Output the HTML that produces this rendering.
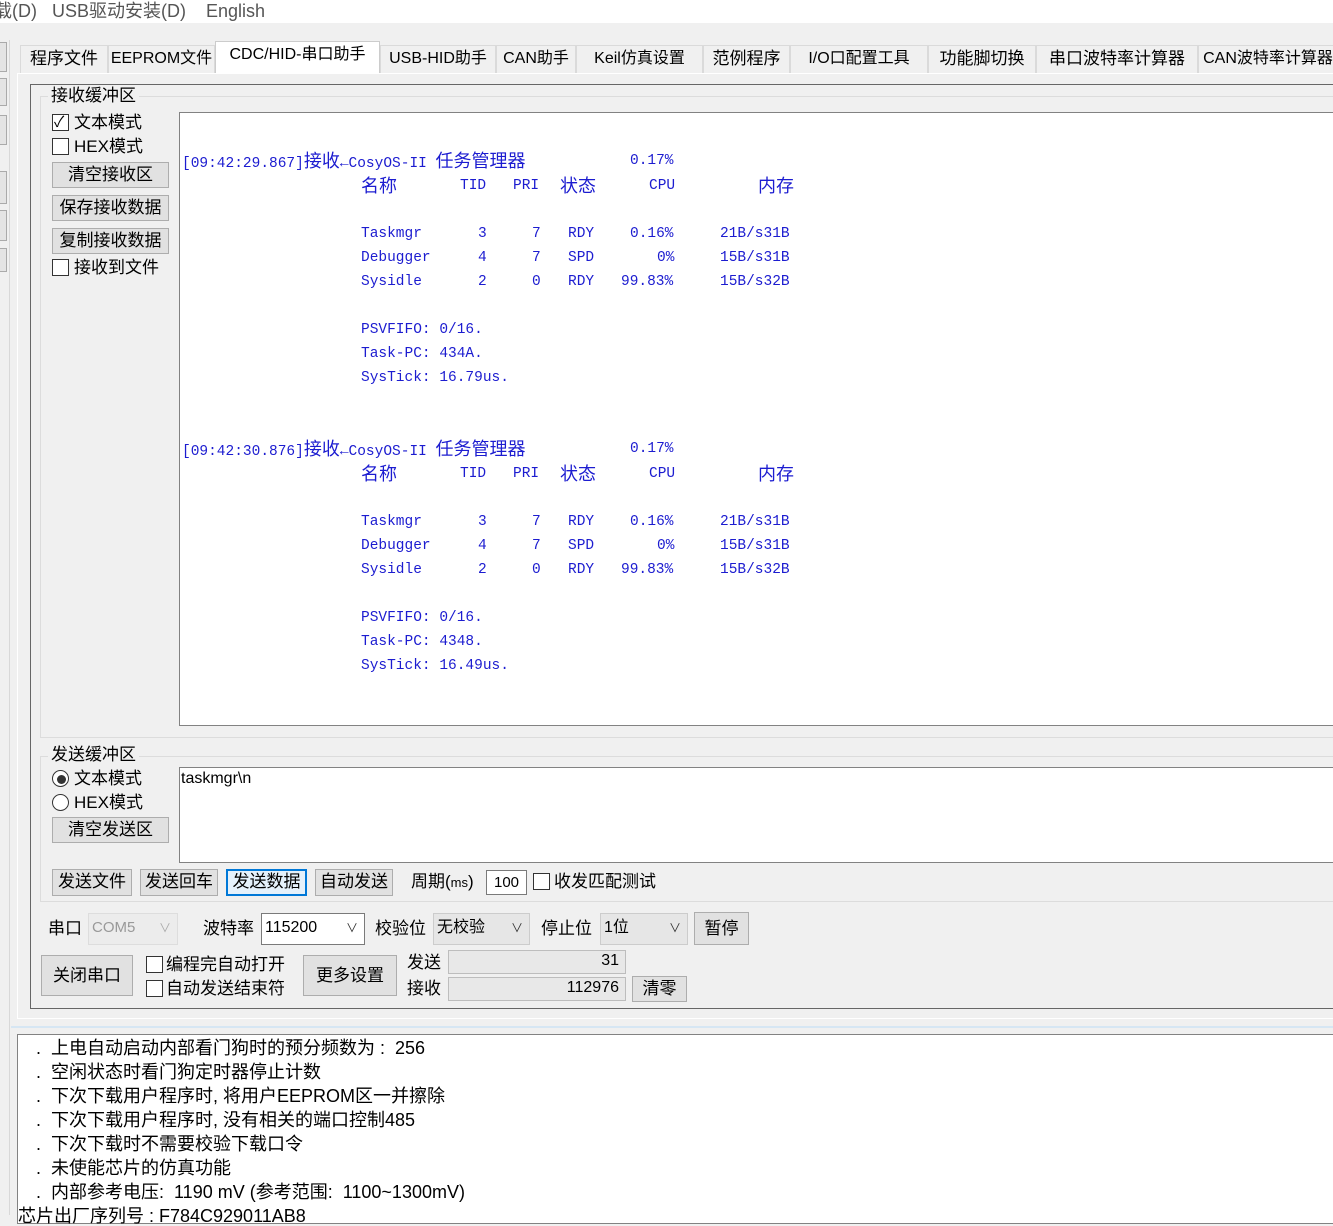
<!DOCTYPE html>
<html><head><meta charset="utf-8"><style>
*{margin:0;padding:0;box-sizing:border-box}
body{width:1333px;height:1215px;overflow:hidden;background:#f0f0f0;position:relative;font-family:"Liberation Sans","Noto Sans CJK SC",sans-serif;color:#000}
.a{position:absolute;white-space:nowrap}
.t{font-size:17px;line-height:20px}
.tab{position:absolute;top:45px;height:28px;background:#f0f0f0;border:1px solid #dadada;border-bottom:none;font-size:17px;line-height:26px;text-align:center;white-space:nowrap;overflow:hidden}
.btn{position:absolute;background:#e1e1e1;border:1px solid #adadad;font-size:17px;line-height:24px;text-align:center;white-space:nowrap}
.cb{position:absolute;width:17px;height:17px;border:1px solid #333;background:#fff}
.rb{position:absolute;width:17px;height:17px;border:1px solid #333;border-radius:50%;background:#fff}
.m{font-family:"Liberation Mono","Noto Sans CJK SC",monospace;font-size:14.5px;color:#1c1cd0;position:absolute;white-space:nowrap;line-height:18px}
.m b{font-weight:normal;font-size:18px;font-family:"Noto Sans CJK SC",sans-serif}
.sel{position:absolute;background:#fff;border:1px solid #7a7a7a;font-size:16px;line-height:28px;padding-left:3px;white-space:nowrap}
.chev{position:absolute;right:6px;top:0;font-size:12px;color:#333}
.box{position:absolute;background:#e8e8e8;border:1px solid #bdbdbd;font-size:16px;line-height:20px;text-align:right;padding-right:6px}
</style></head><body>
<div class="a" style="left:0;top:0;width:1333px;height:23px;background:#fff"></div>
<div class="a t" style="left:-6px;top:1px;color:#555;font-size:18px">载(D)&nbsp;&nbsp; USB驱动安装(D)&nbsp;&nbsp;&nbsp; English</div>

<div class="a" style="left:-2px;top:42px;width:9px;height:30px;border:1px solid #aaa;background:#e4e4e4"></div>
<div class="a" style="left:-2px;top:78px;width:9px;height:28px;border:1px solid #aaa;background:#e4e4e4"></div>
<div class="a" style="left:-2px;top:115px;width:9px;height:30px;border:1px solid #aaa;background:#e4e4e4"></div>
<div class="a" style="left:-2px;top:171px;width:9px;height:33px;border:1px solid #aaa;background:#e4e4e4"></div>
<div class="a" style="left:-2px;top:210px;width:9px;height:31px;border:1px solid #aaa;background:#e4e4e4"></div>
<div class="a" style="left:-2px;top:248px;width:9px;height:24px;border:1px solid #aaa;background:#e4e4e4"></div>
<div class="a" style="left:9px;top:40px;width:1px;height:1175px;background:#d8d8d8"></div>

<div class="tab" style="left:20px;width:88px">程序文件</div>
<div class="tab" style="left:108px;width:107px;font-size:16px">EEPROM文件</div>
<div class="tab" style="left:215px;width:165px;top:41px;height:33px;background:#fff;border-color:#ccc;font-size:16px">CDC/HID-串口助手</div>
<div class="tab" style="left:380px;width:116px;font-size:16px">USB-HID助手</div>
<div class="tab" style="left:496px;width:80px;font-size:16px">CAN助手</div>
<div class="tab" style="left:576px;width:127px;font-size:16px">Keil仿真设置</div>
<div class="tab" style="left:703px;width:87px">范例程序</div>
<div class="tab" style="left:790px;width:138px;font-size:16px">I/O口配置工具</div>
<div class="tab" style="left:928px;width:108px">功能脚切换</div>
<div class="tab" style="left:1036px;width:162px">串口波特率计算器</div>
<div class="tab" style="left:1198px;width:140px;font-size:16px">CAN波特率计算器</div>

<div class="a" style="left:17px;top:73px;width:1330px;height:946px;border:1px solid #fff;border-right:none;background:#f0f0f0"></div>
<div class="a" style="left:30px;top:84px;width:1310px;height:925px;border:1px solid #666;border-right:none"></div>

<div class="a" style="left:40px;top:96px;width:1300px;height:642px;border:1px solid #dcdcdc;border-right:none"></div>
<div class="a t" style="left:48px;top:86px;background:#f0f0f0;padding:0 3px">接收缓冲区</div>
<div class="cb" style="left:52px;top:114px"></div><div class="a" style="left:54px;top:111px;font-size:15px">✓</div>
<div class="a t" style="left:74px;top:113px">文本模式</div>
<div class="cb" style="left:52px;top:138px"></div>
<div class="a t" style="left:74px;top:137px">HEX模式</div>
<div class="btn" style="left:52px;top:162px;width:117px;height:26px">清空接收区</div>
<div class="btn" style="left:52px;top:195px;width:117px;height:26px">保存接收数据</div>
<div class="btn" style="left:52px;top:228px;width:117px;height:26px">复制接收数据</div>
<div class="cb" style="left:52px;top:259px"></div>
<div class="a t" style="left:74px;top:258px">接收到文件</div>

<div class="a" style="left:179px;top:112px;width:1160px;height:614px;background:#fff;border:1px solid #828282;border-right:none"></div>

<div class="m" style="left:182px;top:151px">[09:42:29.867]<b>接收</b>←CosyOS-II <b>任务管理器</b></div>
<div class="m" style="left:630px;top:152px">0.17%</div>
<div class="m" style="left:361px;top:176px"><b>名称</b></div><div class="m" style="left:460px;top:177px">TID</div><div class="m" style="left:513px;top:177px">PRI</div><div class="m" style="left:560px;top:176px"><b>状态</b></div><div class="m" style="left:649px;top:177px">CPU</div><div class="m" style="left:758px;top:176px"><b>内存</b></div>
<div class="m" style="left:361px;top:225px">Taskmgr</div><div class="m" style="left:478px;top:225px">3</div><div class="m" style="left:532px;top:225px">7</div><div class="m" style="left:568px;top:225px">RDY</div><div class="m" style="left:630px;top:225px">0.16%</div><div class="m" style="left:720px;top:225px">21B/s31B</div>
<div class="m" style="left:361px;top:249px">Debugger</div><div class="m" style="left:478px;top:249px">4</div><div class="m" style="left:532px;top:249px">7</div><div class="m" style="left:568px;top:249px">SPD</div><div class="m" style="left:657px;top:249px">0%</div><div class="m" style="left:720px;top:249px">15B/s31B</div>
<div class="m" style="left:361px;top:273px">Sysidle</div><div class="m" style="left:478px;top:273px">2</div><div class="m" style="left:532px;top:273px">0</div><div class="m" style="left:568px;top:273px">RDY</div><div class="m" style="left:621px;top:273px">99.83%</div><div class="m" style="left:720px;top:273px">15B/s32B</div>
<div class="m" style="left:361px;top:321px">PSVFIFO: 0/16.</div>
<div class="m" style="left:361px;top:345px">Task-PC: 434A.</div>
<div class="m" style="left:361px;top:369px">SysTick: 16.79us.</div>

<div class="m" style="left:182px;top:439px">[09:42:30.876]<b>接收</b>←CosyOS-II <b>任务管理器</b></div>
<div class="m" style="left:630px;top:440px">0.17%</div>
<div class="m" style="left:361px;top:464px"><b>名称</b></div><div class="m" style="left:460px;top:465px">TID</div><div class="m" style="left:513px;top:465px">PRI</div><div class="m" style="left:560px;top:464px"><b>状态</b></div><div class="m" style="left:649px;top:465px">CPU</div><div class="m" style="left:758px;top:464px"><b>内存</b></div>
<div class="m" style="left:361px;top:513px">Taskmgr</div><div class="m" style="left:478px;top:513px">3</div><div class="m" style="left:532px;top:513px">7</div><div class="m" style="left:568px;top:513px">RDY</div><div class="m" style="left:630px;top:513px">0.16%</div><div class="m" style="left:720px;top:513px">21B/s31B</div>
<div class="m" style="left:361px;top:537px">Debugger</div><div class="m" style="left:478px;top:537px">4</div><div class="m" style="left:532px;top:537px">7</div><div class="m" style="left:568px;top:537px">SPD</div><div class="m" style="left:657px;top:537px">0%</div><div class="m" style="left:720px;top:537px">15B/s31B</div>
<div class="m" style="left:361px;top:561px">Sysidle</div><div class="m" style="left:478px;top:561px">2</div><div class="m" style="left:532px;top:561px">0</div><div class="m" style="left:568px;top:561px">RDY</div><div class="m" style="left:621px;top:561px">99.83%</div><div class="m" style="left:720px;top:561px">15B/s32B</div>
<div class="m" style="left:361px;top:609px">PSVFIFO: 0/16.</div>
<div class="m" style="left:361px;top:633px">Task-PC: 4348.</div>
<div class="m" style="left:361px;top:657px">SysTick: 16.49us.</div>

<div class="a" style="left:40px;top:756px;width:1300px;height:146px;border:1px solid #dcdcdc;border-right:none"></div>
<div class="a t" style="left:48px;top:745px;background:#f0f0f0;padding:0 3px">发送缓冲区</div>
<div class="rb" style="left:52px;top:770px"></div><div class="a" style="left:57px;top:775px;width:9px;height:9px;border-radius:50%;background:#333"></div>
<div class="a t" style="left:74px;top:769px">文本模式</div>
<div class="rb" style="left:52px;top:794px"></div>
<div class="a t" style="left:74px;top:793px">HEX模式</div>
<div class="btn" style="left:52px;top:817px;width:117px;height:26px">清空发送区</div>
<div class="a" style="left:179px;top:767px;width:1160px;height:96px;background:#fff;border:1px solid #828282;border-right:none"></div>
<div class="a" style="left:181px;top:770px;font-size:16px">taskmgr\n</div>

<div class="btn" style="left:52px;top:869px;width:80px;height:27px">发送文件</div>
<div class="btn" style="left:140px;top:869px;width:78px;height:27px">发送回车</div>
<div class="btn" style="left:226px;top:869px;width:81px;height:27px;border:2px solid #0078d7;background:#e5f1fb;line-height:22px">发送数据</div>
<div class="btn" style="left:315px;top:869px;width:78px;height:27px">自动发送</div>
<div class="a t" style="left:411px;top:872px">周期(<span style="font-size:13px">ms</span>)</div>
<div class="a" style="left:486px;top:870px;width:41px;height:25px;background:#fff;border:1px solid #7a7a7a;font-size:15px;line-height:23px;text-align:center">100</div>
<div class="cb" style="left:533px;top:873px"></div>
<div class="a t" style="left:554px;top:872px">收发匹配测试</div>

<div class="a t" style="left:48px;top:919px">串口</div>
<div class="sel" style="left:88px;top:913px;width:90px;height:32px;background:#ececec;border-color:#ddd;color:#999;font-size:15px">COM5<span class="chev" style="color:#aaa">∨</span></div>
<div class="a t" style="left:203px;top:919px">波特率</div>
<div class="sel" style="left:261px;top:913px;width:104px;height:32px">115200<span class="chev">∨</span></div>
<div class="a t" style="left:375px;top:919px">校验位</div>
<div class="sel" style="left:433px;top:913px;width:97px;height:32px;background:#e6e6e6;border-color:#ccc">无校验<span class="chev">∨</span></div>
<div class="a t" style="left:541px;top:919px">停止位</div>
<div class="sel" style="left:600px;top:913px;width:88px;height:32px;background:#e6e6e6;border-color:#ccc">1位<span class="chev">∨</span></div>
<div class="btn" style="left:694px;top:912px;width:55px;height:33px;line-height:31px">暂停</div>

<div class="btn" style="left:41px;top:955px;width:92px;height:41px;line-height:39px">关闭串口</div>
<div class="cb" style="left:146px;top:956px"></div>
<div class="a t" style="left:166px;top:955px">编程完自动打开</div>
<div class="cb" style="left:146px;top:980px"></div>
<div class="a t" style="left:166px;top:979px">自动发送结束符</div>
<div class="btn" style="left:303px;top:955px;width:94px;height:41px;line-height:39px">更多设置</div>
<div class="a t" style="left:407px;top:953px">发送</div>
<div class="box" style="left:448px;top:950px;width:178px;height:24px">31</div>
<div class="a t" style="left:407px;top:979px">接收</div>
<div class="box" style="left:448px;top:977px;width:178px;height:24px">112976</div>
<div class="btn" style="left:632px;top:976px;width:55px;height:26px">清零</div>

<div class="a" style="left:11px;top:1026px;width:1322px;height:2px;background:#d6e6f3"></div>
<div class="a" style="left:17px;top:1034px;width:1320px;height:190px;background:#fff;border:1px solid #828282;border-right:none"></div>
<div class="a" style="left:36px;top:1036px;font-size:18px;line-height:24px;white-space:pre">.  上电自动启动内部看门狗时的预分频数为 :  256
.  空闲状态时看门狗定时器停止计数
.  下次下载用户程序时, 将用户EEPROM区一并擦除
.  下次下载用户程序时, 没有相关的端口控制485
.  下次下载时不需要校验下载口令
.  未使能芯片的仿真功能
.  内部参考电压:  1190 mV (参考范围:  1100~1300mV)</div>
<div class="a" style="left:18px;top:1206px;font-size:18px;line-height:20px">芯片出厂序列号 :  F784C929011AB8</div>
</body></html>
